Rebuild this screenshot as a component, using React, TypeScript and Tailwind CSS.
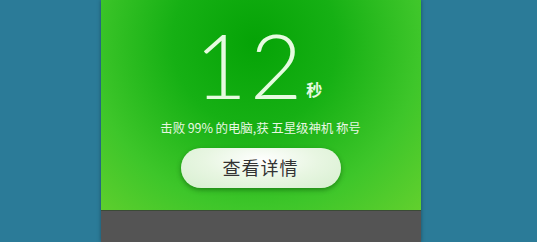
export default function App() {
  return (
    <div className="w-[537px] h-[242px] bg-[#2b7b98] overflow-hidden flex justify-center">
      <div className="ml-[-16px] w-[320px] h-full flex flex-col shadow-[0_0_4px_rgba(0,0,0,0.35)]">
        <div
          className="h-[211px] flex flex-col items-center border-b border-[#3b4a36] bg-[radial-gradient(ellipse_at_48%_20%,#05a306_0%,#16b014_35%,#3ec62a_70%,#62d02e_100%)]"
          style={{ fontFamily: '"Microsoft YaHei", "Noto Sans CJK SC", sans-serif' }}
        >
          <div className="mt-[19px] flex items-baseline h-[90px] pr-[4px]">
            <span
              className="text-[#e6fbe0] text-[90px] leading-[90px] tracking-[3px]"
              style={{ fontFamily: 'Lato, "Open Sans", sans-serif', fontWeight: 300 }}
            >
              12
            </span>
            <span className="text-[#e6fbe0] text-[16px] font-bold leading-none ml-[1px] relative -top-[3px]">秒</span>
          </div>
          <p className="mt-[13px] text-[12.5px] text-[#e8f7e3] leading-none tracking-[-0.1px]">
            击败 99% 的电脑,获 五星级神机 称号
          </p>
          <button className="mt-[13px] w-[160px] h-[40px] rounded-full bg-[radial-gradient(ellipse_at_50%_30%,#ffffff_0%,#e8f6e2_50%,#d6efcf_100%)] shadow-[0_2px_5px_rgba(0,60,0,0.45)] text-[18px] text-[#333] tracking-[1px]">
            查看详情
          </button>
        </div>
        <div className="flex-1 bg-[#545454]" />
      </div>
    </div>
  )
}
